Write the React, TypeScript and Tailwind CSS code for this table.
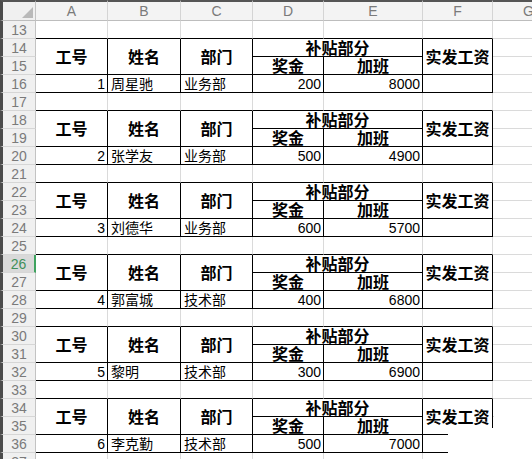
import React from "react";

type Rec = { start: number; id: number; name: string; dept: string; bonus: number; extra: number };

const records: Rec[] = [
  { start: 14, id: 1, name: "周星驰", dept: "业务部", bonus: 200, extra: 8000 },
  { start: 18, id: 2, name: "张学友", dept: "业务部", bonus: 500, extra: 4900 },
  { start: 22, id: 3, name: "刘德华", dept: "业务部", bonus: 600, extra: 5700 },
  { start: 26, id: 4, name: "郭富城", dept: "技术部", bonus: 400, extra: 6800 },
  { start: 30, id: 5, name: "黎明", dept: "技术部", bonus: 300, extra: 6900 },
  { start: 34, id: 6, name: "李克勤", dept: "技术部", bonus: 500, extra: 7000 },
];

const GRID = "grid grid-cols-[36px_72px_73px_72px_71px_99px_70px_72px]";
const SELECTED_ROW = 26;

const RowHead = ({ n }: { n: number }) => {
  const sel = n === SELECTED_ROW;
  return (
    <div
      className={`flex items-end justify-center pb-[1px] border-l-[3px] border-l-[#4b4b4b] border-b border-b-[#d6d6d6] text-[14px] leading-none ${
        sel
          ? "bg-[#d9d9d9] text-[#3f8f5a] border-r-2 border-r-[#3fa35f]"
          : "bg-[#f0f0f0] text-[#7a7a7a] border-r border-r-[#c3c3c3]"
      }`}
    >
      {n}
    </div>
  );
};

const gridCell = "border-r border-b border-[#dadada]";
const tableCell = "border-r border-b border-black";
const headText = "flex items-center justify-center pt-[2px] text-[16px] font-bold leading-none text-black";

const BlankRow = ({ n, beforeTable }: { n: number; beforeTable: boolean }) => (
  <div className={`${GRID} grid-rows-[18px]`}>
    <RowHead n={n} />
    {[0, 1, 2, 3, 4, 5].map((i) => (
      <div
        key={i}
        className={
          beforeTable
            ? "border-r border-r-[#dadada] border-b border-b-black"
            : gridCell
        }
      />
    ))}
    <div className={gridCell} />
  </div>
);

const Block = ({ r }: { r: Rec }) => (
  <div className={`${GRID} grid-rows-[18px_18px_18px]`}>
    {/* first header row */}
    <RowHead n={r.start} />
    <div className={`${tableCell} row-span-2 ${headText}`}>工号</div>
    <div className={`${tableCell} row-span-2 ${headText}`}>姓名</div>
    <div className={`${tableCell} row-span-2 ${headText}`}>部门</div>
    <div className={`${tableCell} col-span-2 ${headText}`}>补贴部分</div>
    <div className={`${tableCell} row-span-2 ${headText}`}>实发工资</div>
    <div className={gridCell} />

    {/* second header row */}
    <RowHead n={r.start + 1} />
    <div className={`${tableCell} ${headText}`}>奖金</div>
    <div className={`${tableCell} ${headText}`}>加班</div>
    <div className={gridCell} />

    {/* data row */}
    <RowHead n={r.start + 2} />
    <div className={`${tableCell} flex items-end justify-end pr-[2px] pb-[1px] text-[14px] leading-none`}>{r.id}</div>
    <div className={`${tableCell} flex items-end pl-[3px] pb-[1px] text-[14px] leading-none`}>{r.name}</div>
    <div className={`${tableCell} flex items-end pl-[3px] pb-[1px] text-[14px] leading-none`}>{r.dept}</div>
    <div className={`${tableCell} flex items-end justify-end pr-[2px] pb-[1px] text-[14px] leading-none`}>{r.bonus}</div>
    <div className={`${tableCell} flex items-end justify-end pr-[2px] pb-[1px] text-[14px] leading-none`}>{r.extra}</div>
    <div className={tableCell} />
    <div className={gridCell} />
  </div>
);

export default function App() {
  const letters = ["A", "B", "C", "D", "E", "F", "G"];
  return (
    <div className="relative w-[532px] h-[459px] overflow-hidden bg-white font-['Liberation_Sans','Noto_Sans_CJK_SC',sans-serif] text-black">
      {/* column headers */}
      <div className={`${GRID} grid-rows-[21px]`}>
        <div className="relative border-l-[3px] border-l-[#4b4b4b] border-t-2 border-t-[#555] border-r border-r-[#c3c3c3] border-b border-b-[#bdbdbd] bg-[#f0f0f0]">
          <svg className="absolute right-[2px] bottom-[2px]" width="11" height="11" viewBox="0 0 11 11">
            <polygon points="11,0 11,11 0,11" fill="#b9b9b9" />
          </svg>
        </div>
        {letters.map((l) => (
          <div
            key={l}
            className="flex items-center justify-center border-t-2 border-t-[#555] border-r border-r-[#d4d4d4] border-b border-b-[#bdbdbd] bg-[#f3f3f3] text-[14px] leading-none text-[#7a7a7a]"
          >
            {l}
          </div>
        ))}
      </div>

      {records.map((r) => (
        <React.Fragment key={r.start}>
          <BlankRow n={r.start - 1} beforeTable />
          <Block r={r} />
        </React.Fragment>
      ))}
      <BlankRow n={37} beforeTable={false} />

      {/* faded corner of the screenshot */}
      <div className="absolute left-[494px] top-[400px] w-[40px] h-[60px] bg-white" />
      <div className="absolute left-[448px] top-[428px] w-[90px] h-[40px] bg-white" />
    </div>
  );
}
